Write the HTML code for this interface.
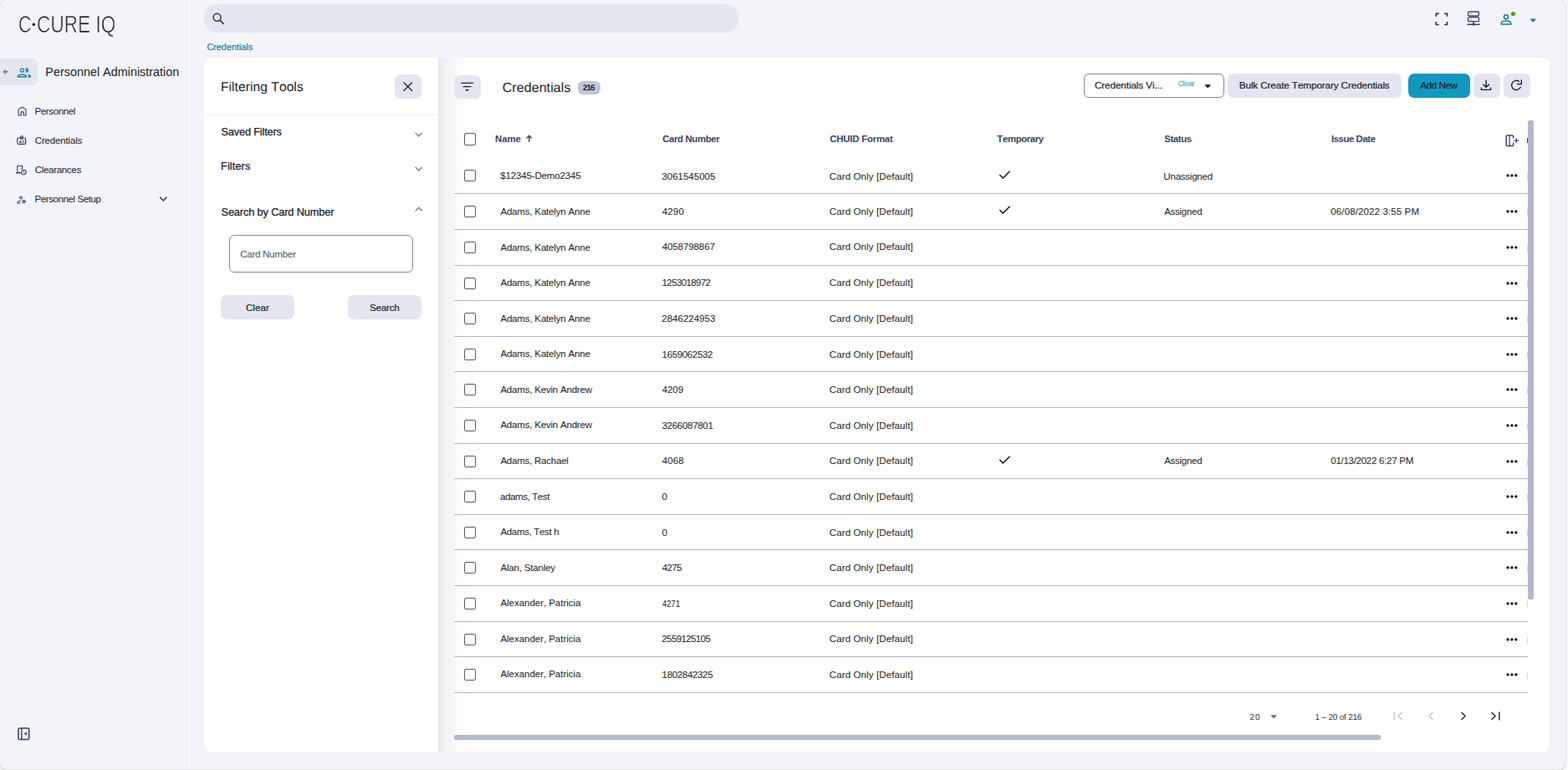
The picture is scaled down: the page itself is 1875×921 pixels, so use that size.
<!DOCTYPE html>
<html lang="en">
<head>
<meta charset="utf-8">
<title>C•CURE IQ - Credentials</title>
<style>
*{box-sizing:border-box;margin:0;padding:0}
html,body{width:1875px;height:921px;overflow:hidden;background:#f7f7f7}
body{font-family:"Liberation Sans",sans-serif;color:#1c1d29;font-kerning:none}
h1,h2,h3{font-weight:400;font-size:inherit}
ul{list-style:none}
a{text-decoration:none;color:inherit}
button{font:inherit;border:0;background:none}
.btn{border-radius:6px;background:#e3e6f1}
.cb{border:1px solid #5b5b5b;border-radius:2px;background:#fff}
.ln{background:#afb6cc}
</style>
</head>
<body>
<div id="app" style="position:absolute;left:0px;top:0px;width:1872px;height:920px;background:#f3f4fa;border-radius:8px;box-shadow:0 0 0 1px #e2e2e2,0 1px 0 1px #d9d9d9;overflow:hidden">
<aside id="sidebar" style="position:absolute;left:0px;top:0px;width:225px;height:920px;border-right:1px solid #fff;box-shadow:inset -1px 0 0 #e3e5f0">
<h1 aria-label="C•CURE IQ"><span style="position:absolute;white-space:nowrap;font-size:28.6px;line-height:36px;color:#242428;top:10.98px;left:21.71px;transform:scaleX(0.7509);transform-origin:0 0;-webkit-text-stroke:0.7px #f3f4fa;paint-order:fill stroke;will-change:transform;">C</span><span style="position:absolute;white-space:nowrap;font-size:13.4px;line-height:17px;color:#1c1c20;top:20.75px;left:38.07px;will-change:transform;">•</span><span style="position:absolute;white-space:nowrap;font-size:28.6px;line-height:36px;color:#242428;top:10.98px;left:43.65px;transform:scaleX(0.7907);transform-origin:0 0;-webkit-text-stroke:0.7px #f3f4fa;paint-order:fill stroke;will-change:transform;">CURE IQ</span></h1>
<div  style="position:absolute;left:0px;top:70px;width:44.75px;height:31.5px;background:#e3e6f1;border-radius:0 6px 6px 0"></div>
<svg style="position:absolute;left:3px;top:82.1px;overflow:visible;" width="8" height="8" viewBox="0 0 8 8" aria-hidden="true"><path d="M7 3.900H1.300M3.900 1.400 1.300 3.900l2.600 2.500" fill="none" stroke="#3a3f55" stroke-width="1" stroke-linejoin="miter"/></svg>
<svg style="position:absolute;left:19.2px;top:76.9px;overflow:visible;" width="20" height="20" viewBox="0 0 20 20" aria-hidden="true"><path transform="scale(.825)" fill="#1a7c9c" stroke="#e3e6f1" stroke-width=".35" d="M9 13.750c-2.340 0-7 1.170-7 3.500V19h14v-1.750c0-2.330-4.660-3.500-7-3.500zM4.340 17c.84-.58 2.870-1.250 4.660-1.250s3.820.67 4.660 1.250H4.340zM9 12c1.930 0 3.500-1.570 3.500-3.500S10.930 5 9 5 5.500 6.570 5.500 8.500 7.070 12 9 12zm0-5c.83 0 1.500.67 1.500 1.500S9.830 10 9 10s-1.500-.67-1.500-1.500S8.170 7 9 7zm7.040 6.810c1.160.84 1.960 1.960 1.960 3.440V19h4v-1.750c0-2.020-3.500-3.170-5.960-3.440zM15 12c1.930 0 3.500-1.570 3.500-3.500S16.930 5 15 5c-.54 0-1.040.13-1.500.35.63.89 1 1.980 1 3.150s-.37 2.260-1 3.150c.46.22.96.35 1.500.35z"/></svg>
<h2 style="position:absolute;white-space:nowrap;font-size:14.4px;line-height:18px;color:#1c1d29;top:77.01px;left:54.32px;">Personnel Administration</h2>
<ul>
<li>
<svg style="position:absolute;left:20.5px;top:126.5px;overflow:visible;" width="11" height="12" viewBox="0 0 11 12" aria-hidden="true"><path d="M1 11V3.900L5.500 1l4.500 2.900V11H7.100V6.900H4.100V11z" fill="none" stroke="#333b5c" stroke-width="1.100" stroke-linejoin="round"/></svg>
<a style="position:absolute;white-space:nowrap;font-size:11.6px;line-height:14px;color:#1c1d29;top:125.58px;left:41.45px;letter-spacing:-0.407px;">Personnel</a>
</li>
<li>
<svg style="position:absolute;left:20px;top:162px;overflow:visible;" width="12" height="12" viewBox="0 0 12 12" aria-hidden="true"><g fill="none" stroke="#333b5c" stroke-width="1.150"><rect x=".8" y="3" width="9.900" height="7.400" rx="1.500"/><rect x="4.800" y=".6" width="2.300" height="3.600" rx="1"/></g><path d="M2.900 8.700 4.500 5.300 6.100 8.700z" fill="#333b5c"/><path d="M7 6.300h2.200M7 8h2.200" stroke="#333b5c" stroke-width=".9" fill="none"/></svg>
<a style="position:absolute;white-space:nowrap;font-size:11.6px;line-height:14px;color:#1c1d29;top:160.58px;left:41.81px;letter-spacing:-0.207px;">Credentials</a>
</li>
<li>
<svg style="position:absolute;left:19px;top:196.5px;overflow:visible;" width="14" height="13" viewBox="0 0 14 13" aria-hidden="true"><g fill="none" stroke="#333b5c"><path d="M1.800 9.200V1.200h5.800v4.200" stroke-width="1.100"/><path d="M.2 9.700h5.800" stroke-width="1.500"/><circle cx="9.400" cy="9.100" r="2.800" stroke-width="1.050"/><path d="M9.400 7.500v1.700l1.100.8" stroke-width=".9"/></g><circle cx="6" cy="4.700" r=".55" fill="#333b5c"/></svg>
<a style="position:absolute;white-space:nowrap;font-size:11.6px;line-height:14px;color:#1c1d29;top:195.58px;left:41.81px;letter-spacing:-0.363px;">Clearances</a>
</li>
<li>
<svg style="position:absolute;left:20px;top:233.5px;overflow:visible;" width="12" height="10" viewBox="0 0 12 10" aria-hidden="true"><g fill="none" stroke="#333b5c" stroke-width="1.050"><circle cx="5.050" cy="2.450" r="1.500"/><path d="M4.800 6.300C2.600 6.300.9 7.100.9 8.500v.5h3.700"/><circle cx="8.550" cy="7.100" r="1.250"/><circle cx="8.550" cy="7.100" r="2.150" stroke-width=".9" stroke-dasharray=".85 1.400"/></g></svg>
<a style="position:absolute;white-space:nowrap;font-size:11.6px;line-height:14px;color:#1c1d29;top:230.58px;left:41.45px;letter-spacing:-0.445px;">Personnel Setup</a>
</li>
</ul>
<svg style="position:absolute;left:190px;top:234px;overflow:visible;" width="11" height="8" viewBox="0 0 11 8" aria-hidden="true"><path d="M1.2 1.8 5.3 5.900 9.400 1.800" fill="none" stroke="#2b3350" stroke-width="1.400"/></svg>
<svg style="position:absolute;left:21.3px;top:870.4px;overflow:visible;" width="15" height="16" viewBox="0 0 15 16" aria-hidden="true"><rect x="1" y="1" width="12.700" height="13.500" rx="1.600" fill="none" stroke="#3a4262" stroke-width="1.600"/><path d="M4.800 1v13.500" stroke="#3a4262" stroke-width="1.400"/><path d="M10.800 5.300v4.400L7.800 7.500z" fill="#3a4262"/></svg>
</aside>
<header id="topbar" style="position:absolute;left:224px;top:0px;width:1648px;height:68px;">
<div role="search" style="position:absolute;left:20px;top:5px;width:640px;height:34px;background:#e3e6f1;border-radius:17px"></div>
<svg style="position:absolute;left:30px;top:15px;overflow:visible;" width="15" height="15" viewBox="0 0 15 15" aria-hidden="true"><circle cx="5.600" cy="5.800" r="4.500" fill="none" stroke="#2f3650" stroke-width="1.500"/><path d="M8.900 9.200 13.800 14" stroke="#2f3650" stroke-width="1.700"/></svg>
<svg style="position:absolute;left:1491.6px;top:14.6px;overflow:visible;" width="16" height="16" viewBox="0 0 16 16" aria-hidden="true"><path d="M1.300 4.700V1.300h3.400M11.100 1.300h3.400v3.400M14.500 11.100v3.400h-3.400M4.700 14.500H1.300v-3.400" fill="none" stroke="#2f3650" stroke-width="1.700"/></svg>
<svg style="position:absolute;left:1529.5px;top:12.5px;overflow:visible;" width="16" height="18" viewBox="0 0 16 18" aria-hidden="true"><g fill="none" stroke="#3a4262" stroke-width="1.300"><rect x="1.600" y="1" width="12.800" height="5" rx="1.200"/><rect x="1.600" y="7.600" width="12.800" height="5" rx="1.200"/><path d="M8 12.600v3M.4 16.300h15.200" stroke-width="1.400"/></g><circle cx="8" cy="16.200" r="1.500" fill="#3a4262"/><path d="M3.600 3.500h3M3.600 10.100h3" stroke="#8a90b0" stroke-width="1"/></svg>
<svg style="position:absolute;left:1569.5px;top:13px;overflow:visible;" width="20" height="18" viewBox="0 0 20 18" aria-hidden="true"><g fill="none" stroke="#1a7c9c" stroke-width="1.600"><circle cx="7" cy="7.300" r="2.500"/><path d="M1.300 16v-.9c0-2 2.800-3.100 5.700-3.100s5.700 1.100 5.700 3.100v.9z"/></g><circle cx="15.500" cy="3.500" r="2.600" fill="#58a30a"/></svg>
<svg style="position:absolute;left:1604.5px;top:21.5px;overflow:visible;" width="9" height="6" viewBox="0 0 9 6" aria-hidden="true"><path d="M.3.400h7.800L4.200 4.700z" fill="#1a7c9c"/></svg>
</header>
<nav>
<a style="position:absolute;white-space:nowrap;font-size:10.9px;line-height:14px;color:#14749c;top:49.22px;left:247.45px;letter-spacing:-0.039px;-webkit-text-stroke:0.15px #14749c;">Credentials</a>
</nav>
<main id="card" style="position:absolute;left:244px;top:69px;width:1608.5px;height:831px;background:#fff;border-radius:9px;overflow:hidden">
<section id="filter-panel" style="position:absolute;left:0px;top:0px;width:280px;height:831px;">
<h2 style="position:absolute;white-space:nowrap;font-size:15.6px;line-height:20px;color:#1c1d29;top:25.99px;left:19.97px;letter-spacing:0.056px;text-rendering:geometricPrecision;">Filtering Tools</h2>
<button type="button" aria-label="Close" style="position:absolute;left:228px;top:20px;width:31.5px;height:28.75px;background:#e3e6f1;border-radius:7px">
<svg style="position:absolute;left:10px;top:9px;overflow:visible;" width="11.5" height="11" viewBox="0 0 11.5 11" aria-hidden="true"><path d="M.6.500l10.300 10.200M10.900.500.6 10.700" stroke="#1c1d29" stroke-width="1.300" fill="none"/></svg>
</button>
<div  style="position:absolute;left:1px;top:68px;width:278px;height:1px;background:#f0f1f7"></div>
<h3 style="position:absolute;white-space:nowrap;font-size:12.8px;line-height:16px;color:#1c1d29;top:80.66px;left:20.52px;letter-spacing:-0.188px;-webkit-text-stroke:0.25px #1c1d29;">Saved Filters</h3>
<svg style="position:absolute;left:252px;top:88.5px;overflow:visible;" width="9.5" height="6.5" viewBox="0 0 9.5 6.5" aria-hidden="true"><path d="M.7.900 4.700 5 8.700.900" fill="none" stroke="#666" stroke-width="1.100"/></svg>
<h3 style="position:absolute;white-space:nowrap;font-size:12.8px;line-height:16px;color:#1c1d29;top:121.86px;left:20.05px;letter-spacing:0.078px;-webkit-text-stroke:0.25px #1c1d29;">Filters</h3>
<svg style="position:absolute;left:252px;top:129.5px;overflow:visible;" width="9.5" height="6.5" viewBox="0 0 9.5 6.5" aria-hidden="true"><path d="M.7.900 4.700 5 8.700.900" fill="none" stroke="#666" stroke-width="1.100"/></svg>
<h3 style="position:absolute;white-space:nowrap;font-size:12.8px;line-height:16px;color:#1c1d29;top:176.66px;left:20.52px;letter-spacing:-0.151px;-webkit-text-stroke:0.25px #1c1d29;">Search by Card Number</h3>
<svg style="position:absolute;left:252px;top:178.3px;overflow:visible;" width="9.5" height="6.5" viewBox="0 0 9.5 6.5" aria-hidden="true"><path d="M.7 5.400 4.700 1.300 8.700 5.400" fill="none" stroke="#666" stroke-width="1.100"/></svg>
<div role="textbox" style="position:absolute;left:30px;top:212px;width:219.5px;height:44.5px;border:1px solid #8b8b8b;border-radius:6px;background:#fff">
<span style="position:absolute;white-space:nowrap;font-size:11.6px;line-height:14px;color:#4d5469;top:14.73px;left:12.16px;letter-spacing:-0.294px;">Card Number</span>
</div>
<button type="button" style="position:absolute;left:20px;top:284px;width:87.5px;height:28.6px;background:#e3e6f1;border-radius:7px">
<span style="position:absolute;white-space:nowrap;font-size:11.6px;line-height:14px;color:#1c1d29;top:7.58px;left:29.91px;letter-spacing:0.090px;-webkit-text-stroke:0.2px #1c1d29;">Clear</span>
</button>
<button type="button" style="position:absolute;left:172px;top:284px;width:87.75px;height:28.6px;background:#e3e6f1;border-radius:7px">
<span style="position:absolute;white-space:nowrap;font-size:11.6px;line-height:14px;color:#1c1d29;top:7.58px;left:26.07px;letter-spacing:-0.215px;-webkit-text-stroke:0.2px #1c1d29;">Search</span>
</button>
</section>
<section id="list-panel" style="position:absolute;left:280px;top:0px;width:1329px;height:831px;background:linear-gradient(90deg,#e8e8e8 0,#ececec 4px,#f0f0f0 8px,#f4f4f4 12px,#f7f7f7 17px,#fafafa 22px,#fcfcfc 29px,#fefefe 38px,#fff 47px)">
<button type="button" aria-label="Filter" style="position:absolute;left:19px;top:21px;width:31.6px;height:27.8px;background:#e3e6f1;border-radius:7px">
<svg style="position:absolute;left:8px;top:8px;overflow:visible;" width="15.5" height="11" viewBox="0 0 15.5 11" aria-hidden="true"><path d="M.2 1.400h14.800M2.700 5.600h9.800M5.800 9.800h3.600" stroke="#1c1d29" stroke-width="1.400" fill="none"/></svg>
</button>
<h2 style="position:absolute;white-space:nowrap;font-size:16px;line-height:20px;color:#1c1d29;top:26.95px;left:76.69px;letter-spacing:0.076px;text-rendering:geometricPrecision;">Credentials</h2>
<span  style="position:absolute;left:166.6px;top:27.9px;width:27px;height:15.9px;background:#c2c6d7;border-radius:6px">
<span style="position:absolute;white-space:nowrap;font-size:9.7px;line-height:12px;color:#1c1d29;top:2.64px;font-weight:700;left:6.46px;letter-spacing:-0.874px;text-rendering:geometricPrecision;">216</span>
</span>
<div role="combobox" style="position:absolute;left:772.25px;top:19px;width:167.25px;height:28.6px;border:1px solid #878787;border-radius:6px;background:#fff">
<span style="position:absolute;white-space:nowrap;font-size:11.8px;line-height:15px;color:#1c1d29;top:6.01px;left:11.65px;letter-spacing:-0.138px;-webkit-text-stroke:0.2px #1c1d29;">Credentials Vi...</span>
<span style="position:absolute;white-space:nowrap;font-size:9px;line-height:11px;color:#23a0c6;top:5.98px;left:111.19px;letter-spacing:-0.350px;">Clear</span>
<svg style="position:absolute;left:142.95px;top:11.6px;overflow:visible;" width="9" height="5.5" viewBox="0 0 9 5.5" aria-hidden="true"><path d="M.3.200h8L4.300 4.500z" fill="#1c1d29"/></svg>
</div>
<button type="button" style="position:absolute;left:944px;top:19px;width:208px;height:28.8px;background:#e3e6f1;border-radius:7px">
<span style="position:absolute;white-space:nowrap;font-size:11.8px;line-height:15px;color:#1c1d29;top:7.21px;left:13.78px;letter-spacing:-0.153px;-webkit-text-stroke:0.2px #1c1d29;">Bulk Create Temporary Credentials</span>
</button>
<button type="button" style="position:absolute;left:1160px;top:19px;width:73.5px;height:28.8px;background:#1198bf;border-radius:7px">
<span style="position:absolute;white-space:nowrap;font-size:11.8px;line-height:15px;color:#1c1d29;top:7.21px;left:14.23px;letter-spacing:-0.523px;-webkit-text-stroke:0.2px #1c1d29;">Add New</span>
</button>
<button type="button" aria-label="Download" style="position:absolute;left:1238px;top:19px;width:31.6px;height:28.8px;background:#e3e6f1;border-radius:7px">
<svg style="position:absolute;left:8px;top:7.4px;overflow:visible;" width="14.5" height="14" viewBox="0 0 14.5 14" aria-hidden="true"><path d="M7.100.600v8.500M3.300 5.700l3.800 3.600 3.800-3.600M1.400 9.800v2.600h11.200V9.800" fill="none" stroke="#1c1d29" stroke-width="1.350"/></svg>
</button>
<button type="button" aria-label="Refresh" style="position:absolute;left:1274px;top:19px;width:32px;height:28.8px;background:#e3e6f1;border-radius:7px">
<svg style="position:absolute;left:7.6px;top:7.4px;overflow:visible;" width="14.5" height="14" viewBox="0 0 14.5 14" aria-hidden="true"><path d="M12.460 8.820A5.600 5.600 0 1 1 11.160 2.940" fill="none" stroke="#1c1d29" stroke-width="1.350"/><path d="M13.300.600v5H8.100" fill="none" stroke="#1c1d29" stroke-width="1.350"/></svg>
</button>
<div role="table" style="position:absolute;left:19px;top:75px;width:1291px;height:728px;overflow:hidden">
<div role="row" style="position:absolute;left:0px;top:2px;width:1283.5px;height:42.67px;">
<span class="cb" style="position:absolute;left:12px;top:13px;width:14px;height:14.5px;"></span>
<span style="position:absolute;white-space:nowrap;font-size:11.4px;line-height:14px;color:#394461;top:12.95px;font-weight:700;left:48.99px;letter-spacing:-0.082px;">Name</span>
<span style="position:absolute;white-space:nowrap;font-size:11.4px;line-height:14px;color:#394461;top:12.95px;font-weight:700;left:249.28px;letter-spacing:-0.382px;">Card Number</span>
<span style="position:absolute;white-space:nowrap;font-size:11.4px;line-height:14px;color:#394461;top:12.95px;font-weight:700;left:449.28px;letter-spacing:-0.218px;">CHUID Format</span>
<span style="position:absolute;white-space:nowrap;font-size:11.4px;line-height:14px;color:#394461;top:12.95px;font-weight:700;left:649.37px;letter-spacing:-0.379px;">Temporary</span>
<span style="position:absolute;white-space:nowrap;font-size:11.4px;line-height:14px;color:#394461;top:12.95px;font-weight:700;left:849.27px;letter-spacing:-0.399px;">Status</span>
<span style="position:absolute;white-space:nowrap;font-size:11.4px;line-height:14px;color:#394461;top:12.95px;font-weight:700;left:1048.99px;letter-spacing:-0.442px;">Issue Date</span>
<svg style="position:absolute;left:85.5px;top:15.3px;overflow:visible;" width="7.5" height="9" viewBox="0 0 7.5 9" aria-hidden="true"><path d="M3.750 8.700V1.400M.6 4.500 3.750 1.300 6.900 4.500" fill="none" stroke="#394461" stroke-width="1.450"/></svg>
<svg style="position:absolute;left:1256.5px;top:14.5px;overflow:visible;" width="17" height="15" viewBox="0 0 17 15" aria-hidden="true"><path d="M9.700 4.400V2.200a1.300 1.300 0 0 0-1.300-1.300H2.500a1.300 1.300 0 0 0-1.300 1.300v10a1.300 1.300 0 0 0 1.300 1.300h5.900a1.300 1.300 0 0 0 1.300-1.300V9.800" fill="none" stroke="#394461" stroke-width="1.500"/><path d="M5.100.900v12.600" stroke="#394461" stroke-width="1.200"/><path d="M10.400 7.100h5.800M13.300 4.200v5.800" stroke="#394461" stroke-width="1.250"/></svg>
<div  style="position:absolute;left:1283px;top:19px;width:1px;height:5.5px;background:#394461"></div>
</div>
<div role="row" style="position:absolute;left:0px;top:44.4px;width:1284px;height:43.6px;">
<div class="ln" style="position:absolute;left:0px;top:42.6px;width:1284px;height:1px;"></div>
<span class="cb" style="position:absolute;left:12px;top:14.6px;width:14px;height:14px;"></span>
<span style="position:absolute;white-space:nowrap;font-size:11.6px;line-height:14px;color:#1c1d29;top:14.68px;left:55.28px;letter-spacing:-0.201px;">$12345-Demo2345</span>
<span style="position:absolute;white-space:nowrap;font-size:11.6px;line-height:14px;color:#1c1d29;top:15.68px;left:248.46px;letter-spacing:-0.065px;">3061545005</span>
<span style="position:absolute;white-space:nowrap;font-size:11.6px;line-height:14px;color:#1c1d29;top:15.68px;left:448.81px;letter-spacing:0.071px;">Card Only [Default]</span>
<svg style="position:absolute;left:650.5px;top:15.6px;overflow:visible;" width="14" height="10" viewBox="0 0 14 10" aria-hidden="true"><path d="M1.300 5 5.300 8.900 13.600.800" fill="none" stroke="#111" stroke-width="1.400"/></svg>
<span style="position:absolute;white-space:nowrap;font-size:11.6px;line-height:14px;color:#1c1d29;top:15.68px;left:848.36px;letter-spacing:-0.274px;">Unassigned</span>
<svg style="position:absolute;left:1257.5px;top:19.6px;overflow:visible;" width="14" height="4" viewBox="0 0 14 4" aria-hidden="true"><circle cx="2.050" cy="1.950" r="1.650" fill="#0b0b10"/><circle cx="6.900" cy="1.950" r="1.650" fill="#0b0b10"/><circle cx="11.800" cy="1.950" r="1.650" fill="#0b0b10"/></svg>
<div  style="position:absolute;left:1283px;top:18.6px;width:1px;height:8px;background:#f5d58e"></div>
</div>
<div role="row" style="position:absolute;left:0px;top:88px;width:1284px;height:43px;">
<div class="ln" style="position:absolute;left:0px;top:42px;width:1284px;height:1px;"></div>
<span class="cb" style="position:absolute;left:12px;top:14px;width:14px;height:14px;"></span>
<span style="position:absolute;white-space:nowrap;font-size:11.6px;line-height:14px;color:#1c1d29;top:14.08px;left:55.38px;letter-spacing:-0.218px;">Adams, Katelyn Anne</span>
<span style="position:absolute;white-space:nowrap;font-size:11.6px;line-height:14px;color:#1c1d29;top:14.08px;left:248.63px;letter-spacing:0.138px;">4290</span>
<span style="position:absolute;white-space:nowrap;font-size:11.6px;line-height:14px;color:#1c1d29;top:14.08px;left:448.81px;letter-spacing:0.071px;">Card Only [Default]</span>
<svg style="position:absolute;left:650.5px;top:14px;overflow:visible;" width="14" height="10" viewBox="0 0 14 10" aria-hidden="true"><path d="M1.300 5 5.300 8.900 13.600.800" fill="none" stroke="#111" stroke-width="1.400"/></svg>
<span style="position:absolute;white-space:nowrap;font-size:11.6px;line-height:14px;color:#1c1d29;top:14.08px;left:849.23px;letter-spacing:-0.328px;">Assigned</span>
<span style="position:absolute;white-space:nowrap;font-size:11.6px;line-height:14px;color:#1c1d29;top:14.08px;left:1048.3px;letter-spacing:0.078px;">06/08/2022 3:55 PM</span>
<svg style="position:absolute;left:1257.5px;top:19px;overflow:visible;" width="14" height="4" viewBox="0 0 14 4" aria-hidden="true"><circle cx="2.050" cy="1.950" r="1.650" fill="#0b0b10"/><circle cx="6.900" cy="1.950" r="1.650" fill="#0b0b10"/><circle cx="11.800" cy="1.950" r="1.650" fill="#0b0b10"/></svg>
<div  style="position:absolute;left:1283px;top:18px;width:1px;height:8px;background:#f5d58e"></div>
</div>
<div role="row" style="position:absolute;left:0px;top:131px;width:1284px;height:43px;">
<div class="ln" style="position:absolute;left:0px;top:42px;width:1284px;height:1px;"></div>
<span class="cb" style="position:absolute;left:12px;top:14px;width:14px;height:14px;"></span>
<span style="position:absolute;white-space:nowrap;font-size:11.6px;line-height:14px;color:#1c1d29;top:14.08px;left:55.38px;letter-spacing:-0.218px;">Adams, Katelyn Anne</span>
<span style="position:absolute;white-space:nowrap;font-size:11.6px;line-height:14px;color:#1c1d29;top:13.08px;left:248.63px;letter-spacing:-0.129px;">4058798867</span>
<span style="position:absolute;white-space:nowrap;font-size:11.6px;line-height:14px;color:#1c1d29;top:13.08px;left:448.81px;letter-spacing:0.071px;">Card Only [Default]</span>
<svg style="position:absolute;left:1257.5px;top:19px;overflow:visible;" width="14" height="4" viewBox="0 0 14 4" aria-hidden="true"><circle cx="2.050" cy="1.950" r="1.650" fill="#0b0b10"/><circle cx="6.900" cy="1.950" r="1.650" fill="#0b0b10"/><circle cx="11.800" cy="1.950" r="1.650" fill="#0b0b10"/></svg>
<div  style="position:absolute;left:1283px;top:18px;width:1px;height:8px;background:#f5d58e"></div>
</div>
<div role="row" style="position:absolute;left:0px;top:174px;width:1284px;height:42px;">
<div class="ln" style="position:absolute;left:0px;top:41px;width:1284px;height:1px;"></div>
<span class="cb" style="position:absolute;left:12px;top:14px;width:14px;height:14px;"></span>
<span style="position:absolute;white-space:nowrap;font-size:11.6px;line-height:14px;color:#1c1d29;top:13.08px;left:55.38px;letter-spacing:-0.218px;">Adams, Katelyn Anne</span>
<span style="position:absolute;white-space:nowrap;font-size:11.6px;line-height:14px;color:#1c1d29;top:13.08px;left:248.62px;letter-spacing:-0.683px;">1253018972</span>
<span style="position:absolute;white-space:nowrap;font-size:11.6px;line-height:14px;color:#1c1d29;top:13.08px;left:448.81px;letter-spacing:0.071px;">Card Only [Default]</span>
<svg style="position:absolute;left:1257.5px;top:19px;overflow:visible;" width="14" height="4" viewBox="0 0 14 4" aria-hidden="true"><circle cx="2.050" cy="1.950" r="1.650" fill="#0b0b10"/><circle cx="6.900" cy="1.950" r="1.650" fill="#0b0b10"/><circle cx="11.800" cy="1.950" r="1.650" fill="#0b0b10"/></svg>
<div  style="position:absolute;left:1283px;top:18px;width:1px;height:8px;background:#f5d58e"></div>
</div>
<div role="row" style="position:absolute;left:0px;top:216px;width:1284px;height:43px;">
<div class="ln" style="position:absolute;left:0px;top:42px;width:1284px;height:1px;"></div>
<span class="cb" style="position:absolute;left:12px;top:14px;width:14px;height:14px;"></span>
<span style="position:absolute;white-space:nowrap;font-size:11.6px;line-height:14px;color:#1c1d29;top:14.08px;left:55.38px;letter-spacing:-0.218px;">Adams, Katelyn Anne</span>
<span style="position:absolute;white-space:nowrap;font-size:11.6px;line-height:14px;color:#1c1d29;top:14.08px;left:248.32px;letter-spacing:-0.047px;">2846224953</span>
<span style="position:absolute;white-space:nowrap;font-size:11.6px;line-height:14px;color:#1c1d29;top:14.08px;left:448.81px;letter-spacing:0.071px;">Card Only [Default]</span>
<svg style="position:absolute;left:1257.5px;top:19px;overflow:visible;" width="14" height="4" viewBox="0 0 14 4" aria-hidden="true"><circle cx="2.050" cy="1.950" r="1.650" fill="#0b0b10"/><circle cx="6.900" cy="1.950" r="1.650" fill="#0b0b10"/><circle cx="11.800" cy="1.950" r="1.650" fill="#0b0b10"/></svg>
<div  style="position:absolute;left:1283px;top:18px;width:1px;height:8px;background:#f5d58e"></div>
</div>
<div role="row" style="position:absolute;left:0px;top:259px;width:1284px;height:42px;">
<div class="ln" style="position:absolute;left:0px;top:41px;width:1284px;height:1px;"></div>
<span class="cb" style="position:absolute;left:12px;top:14px;width:14px;height:14px;"></span>
<span style="position:absolute;white-space:nowrap;font-size:11.6px;line-height:14px;color:#1c1d29;top:13.08px;left:55.38px;letter-spacing:-0.218px;">Adams, Katelyn Anne</span>
<span style="position:absolute;white-space:nowrap;font-size:11.6px;line-height:14px;color:#1c1d29;top:14.08px;left:248.62px;letter-spacing:-0.405px;">1659062532</span>
<span style="position:absolute;white-space:nowrap;font-size:11.6px;line-height:14px;color:#1c1d29;top:14.08px;left:448.81px;letter-spacing:0.071px;">Card Only [Default]</span>
<svg style="position:absolute;left:1257.5px;top:19px;overflow:visible;" width="14" height="4" viewBox="0 0 14 4" aria-hidden="true"><circle cx="2.050" cy="1.950" r="1.650" fill="#0b0b10"/><circle cx="6.900" cy="1.950" r="1.650" fill="#0b0b10"/><circle cx="11.800" cy="1.950" r="1.650" fill="#0b0b10"/></svg>
<div  style="position:absolute;left:1283px;top:18px;width:1px;height:8px;background:#f5d58e"></div>
</div>
<div role="row" style="position:absolute;left:0px;top:301px;width:1284px;height:43px;">
<div class="ln" style="position:absolute;left:0px;top:42px;width:1284px;height:1px;"></div>
<span class="cb" style="position:absolute;left:12px;top:14px;width:14px;height:14px;"></span>
<span style="position:absolute;white-space:nowrap;font-size:11.6px;line-height:14px;color:#1c1d29;top:14.08px;left:55.38px;letter-spacing:-0.243px;">Adams, Kevin Andrew</span>
<span style="position:absolute;white-space:nowrap;font-size:11.6px;line-height:14px;color:#1c1d29;top:14.08px;left:248.63px;letter-spacing:-0.080px;">4209</span>
<span style="position:absolute;white-space:nowrap;font-size:11.6px;line-height:14px;color:#1c1d29;top:14.08px;left:448.81px;letter-spacing:0.071px;">Card Only [Default]</span>
<svg style="position:absolute;left:1257.5px;top:19px;overflow:visible;" width="14" height="4" viewBox="0 0 14 4" aria-hidden="true"><circle cx="2.050" cy="1.950" r="1.650" fill="#0b0b10"/><circle cx="6.900" cy="1.950" r="1.650" fill="#0b0b10"/><circle cx="11.800" cy="1.950" r="1.650" fill="#0b0b10"/></svg>
<div  style="position:absolute;left:1283px;top:18px;width:1px;height:8px;background:#f5d58e"></div>
</div>
<div role="row" style="position:absolute;left:0px;top:344px;width:1284px;height:43px;">
<div class="ln" style="position:absolute;left:0px;top:42px;width:1284px;height:1px;"></div>
<span class="cb" style="position:absolute;left:12px;top:14px;width:14px;height:14px;"></span>
<span style="position:absolute;white-space:nowrap;font-size:11.6px;line-height:14px;color:#1c1d29;top:13.08px;left:55.38px;letter-spacing:-0.243px;">Adams, Kevin Andrew</span>
<span style="position:absolute;white-space:nowrap;font-size:11.6px;line-height:14px;color:#1c1d29;top:14.08px;left:248.46px;letter-spacing:-0.334px;">3266087801</span>
<span style="position:absolute;white-space:nowrap;font-size:11.6px;line-height:14px;color:#1c1d29;top:14.08px;left:448.81px;letter-spacing:0.071px;">Card Only [Default]</span>
<svg style="position:absolute;left:1257.5px;top:19px;overflow:visible;" width="14" height="4" viewBox="0 0 14 4" aria-hidden="true"><circle cx="2.050" cy="1.950" r="1.650" fill="#0b0b10"/><circle cx="6.900" cy="1.950" r="1.650" fill="#0b0b10"/><circle cx="11.800" cy="1.950" r="1.650" fill="#0b0b10"/></svg>
<div  style="position:absolute;left:1283px;top:18px;width:1px;height:8px;background:#f5d58e"></div>
</div>
<div role="row" style="position:absolute;left:0px;top:387px;width:1284px;height:42px;">
<div class="ln" style="position:absolute;left:0px;top:41px;width:1284px;height:1px;"></div>
<span class="cb" style="position:absolute;left:12px;top:14px;width:14px;height:14px;"></span>
<span style="position:absolute;white-space:nowrap;font-size:11.6px;line-height:14px;color:#1c1d29;top:13.08px;left:55.38px;letter-spacing:-0.274px;">Adams, Rachael</span>
<span style="position:absolute;white-space:nowrap;font-size:11.6px;line-height:14px;color:#1c1d29;top:13.08px;left:248.63px;letter-spacing:0.072px;">4068</span>
<span style="position:absolute;white-space:nowrap;font-size:11.6px;line-height:14px;color:#1c1d29;top:13.08px;left:448.81px;letter-spacing:0.071px;">Card Only [Default]</span>
<svg style="position:absolute;left:650.5px;top:14px;overflow:visible;" width="14" height="10" viewBox="0 0 14 10" aria-hidden="true"><path d="M1.300 5 5.300 8.900 13.600.800" fill="none" stroke="#111" stroke-width="1.400"/></svg>
<span style="position:absolute;white-space:nowrap;font-size:11.6px;line-height:14px;color:#1c1d29;top:13.08px;left:849.23px;letter-spacing:-0.328px;">Assigned</span>
<span style="position:absolute;white-space:nowrap;font-size:11.6px;line-height:14px;color:#1c1d29;top:13.08px;left:1048.3px;letter-spacing:-0.319px;">01/13/2022 6:27 PM</span>
<svg style="position:absolute;left:1257.5px;top:19px;overflow:visible;" width="14" height="4" viewBox="0 0 14 4" aria-hidden="true"><circle cx="2.050" cy="1.950" r="1.650" fill="#0b0b10"/><circle cx="6.900" cy="1.950" r="1.650" fill="#0b0b10"/><circle cx="11.800" cy="1.950" r="1.650" fill="#0b0b10"/></svg>
<div  style="position:absolute;left:1283px;top:18px;width:1px;height:8px;background:#f5d58e"></div>
</div>
<div role="row" style="position:absolute;left:0px;top:429px;width:1284px;height:43px;">
<div class="ln" style="position:absolute;left:0px;top:42px;width:1284px;height:1px;"></div>
<span class="cb" style="position:absolute;left:12px;top:14px;width:14px;height:14px;"></span>
<span style="position:absolute;white-space:nowrap;font-size:11.6px;line-height:14px;color:#1c1d29;top:14.08px;left:54.91px;letter-spacing:-0.424px;">adams, Test</span>
<span style="position:absolute;white-space:nowrap;font-size:11.6px;line-height:14px;color:#1c1d29;top:14.08px;left:248.45px;">0</span>
<span style="position:absolute;white-space:nowrap;font-size:11.6px;line-height:14px;color:#1c1d29;top:14.08px;left:448.81px;letter-spacing:0.071px;">Card Only [Default]</span>
<svg style="position:absolute;left:1257.5px;top:19px;overflow:visible;" width="14" height="4" viewBox="0 0 14 4" aria-hidden="true"><circle cx="2.050" cy="1.950" r="1.650" fill="#0b0b10"/><circle cx="6.900" cy="1.950" r="1.650" fill="#0b0b10"/><circle cx="11.800" cy="1.950" r="1.650" fill="#0b0b10"/></svg>
<div  style="position:absolute;left:1283px;top:18px;width:1px;height:8px;background:#f5d58e"></div>
</div>
<div role="row" style="position:absolute;left:0px;top:472px;width:1284px;height:42px;">
<div class="ln" style="position:absolute;left:0px;top:41px;width:1284px;height:1px;"></div>
<span class="cb" style="position:absolute;left:12px;top:14px;width:14px;height:14px;"></span>
<span style="position:absolute;white-space:nowrap;font-size:11.6px;line-height:14px;color:#1c1d29;top:13.08px;left:55.38px;letter-spacing:-0.376px;">Adams, Test h</span>
<span style="position:absolute;white-space:nowrap;font-size:11.6px;line-height:14px;color:#1c1d29;top:14.08px;left:248.45px;">0</span>
<span style="position:absolute;white-space:nowrap;font-size:11.6px;line-height:14px;color:#1c1d29;top:14.08px;left:448.81px;letter-spacing:0.071px;">Card Only [Default]</span>
<svg style="position:absolute;left:1257.5px;top:19px;overflow:visible;" width="14" height="4" viewBox="0 0 14 4" aria-hidden="true"><circle cx="2.050" cy="1.950" r="1.650" fill="#0b0b10"/><circle cx="6.900" cy="1.950" r="1.650" fill="#0b0b10"/><circle cx="11.800" cy="1.950" r="1.650" fill="#0b0b10"/></svg>
<div  style="position:absolute;left:1283px;top:18px;width:1px;height:8px;background:#f5d58e"></div>
</div>
<div role="row" style="position:absolute;left:0px;top:514px;width:1284px;height:43px;">
<div class="ln" style="position:absolute;left:0px;top:42px;width:1284px;height:1px;"></div>
<span class="cb" style="position:absolute;left:12px;top:14px;width:14px;height:14px;"></span>
<span style="position:absolute;white-space:nowrap;font-size:11.6px;line-height:14px;color:#1c1d29;top:14.08px;left:55.38px;letter-spacing:-0.213px;">Alan, Stanley</span>
<span style="position:absolute;white-space:nowrap;font-size:11.6px;line-height:14px;color:#1c1d29;top:14.08px;left:248.63px;letter-spacing:-0.684px;">4275</span>
<span style="position:absolute;white-space:nowrap;font-size:11.6px;line-height:14px;color:#1c1d29;top:14.08px;left:448.81px;letter-spacing:0.071px;">Card Only [Default]</span>
<svg style="position:absolute;left:1257.5px;top:19px;overflow:visible;" width="14" height="4" viewBox="0 0 14 4" aria-hidden="true"><circle cx="2.050" cy="1.950" r="1.650" fill="#0b0b10"/><circle cx="6.900" cy="1.950" r="1.650" fill="#0b0b10"/><circle cx="11.800" cy="1.950" r="1.650" fill="#0b0b10"/></svg>
<div  style="position:absolute;left:1283px;top:18px;width:1px;height:8px;background:#f5d58e"></div>
</div>
<div role="row" style="position:absolute;left:0px;top:557px;width:1284px;height:43px;">
<div class="ln" style="position:absolute;left:0px;top:42px;width:1284px;height:1px;"></div>
<span class="cb" style="position:absolute;left:12px;top:14px;width:14px;height:14px;"></span>
<span style="position:absolute;white-space:nowrap;font-size:11.6px;line-height:14px;color:#1c1d29;top:13.08px;left:55.38px;letter-spacing:-0.074px;">Alexander, Patricia</span>
<span style="position:absolute;white-space:nowrap;font-size:11.6px;line-height:14px;color:#1c1d29;top:14.08px;left:248.68px;transform:scaleX(0.8209);transform-origin:0 0;">4271</span>
<span style="position:absolute;white-space:nowrap;font-size:11.6px;line-height:14px;color:#1c1d29;top:14.08px;left:448.81px;letter-spacing:0.071px;">Card Only [Default]</span>
<svg style="position:absolute;left:1257.5px;top:19px;overflow:visible;" width="14" height="4" viewBox="0 0 14 4" aria-hidden="true"><circle cx="2.050" cy="1.950" r="1.650" fill="#0b0b10"/><circle cx="6.900" cy="1.950" r="1.650" fill="#0b0b10"/><circle cx="11.800" cy="1.950" r="1.650" fill="#0b0b10"/></svg>
<div  style="position:absolute;left:1283px;top:18px;width:1px;height:8px;background:#f5d58e"></div>
</div>
<div role="row" style="position:absolute;left:0px;top:600px;width:1284px;height:42px;">
<div class="ln" style="position:absolute;left:0px;top:41px;width:1284px;height:1px;"></div>
<span class="cb" style="position:absolute;left:12px;top:14px;width:14px;height:14px;"></span>
<span style="position:absolute;white-space:nowrap;font-size:11.6px;line-height:14px;color:#1c1d29;top:13.08px;left:55.38px;letter-spacing:-0.074px;">Alexander, Patricia</span>
<span style="position:absolute;white-space:nowrap;font-size:11.6px;line-height:14px;color:#1c1d29;top:13.08px;left:248.32px;letter-spacing:-0.660px;">2559125105</span>
<span style="position:absolute;white-space:nowrap;font-size:11.6px;line-height:14px;color:#1c1d29;top:13.08px;left:448.81px;letter-spacing:0.071px;">Card Only [Default]</span>
<svg style="position:absolute;left:1257.5px;top:19px;overflow:visible;" width="14" height="4" viewBox="0 0 14 4" aria-hidden="true"><circle cx="2.050" cy="1.950" r="1.650" fill="#0b0b10"/><circle cx="6.900" cy="1.950" r="1.650" fill="#0b0b10"/><circle cx="11.800" cy="1.950" r="1.650" fill="#0b0b10"/></svg>
<div  style="position:absolute;left:1283px;top:18px;width:1px;height:8px;background:#f5d58e"></div>
</div>
<div role="row" style="position:absolute;left:0px;top:642px;width:1284px;height:43px;">
<div class="ln" style="position:absolute;left:0px;top:42px;width:1284px;height:1px;"></div>
<span class="cb" style="position:absolute;left:12px;top:14px;width:14px;height:14px;"></span>
<span style="position:absolute;white-space:nowrap;font-size:11.6px;line-height:14px;color:#1c1d29;top:13.08px;left:55.38px;letter-spacing:-0.074px;">Alexander, Patricia</span>
<span style="position:absolute;white-space:nowrap;font-size:11.6px;line-height:14px;color:#1c1d29;top:14.08px;left:248.62px;letter-spacing:-0.388px;">1802842325</span>
<span style="position:absolute;white-space:nowrap;font-size:11.6px;line-height:14px;color:#1c1d29;top:14.08px;left:448.81px;letter-spacing:0.071px;">Card Only [Default]</span>
<svg style="position:absolute;left:1257.5px;top:19px;overflow:visible;" width="14" height="4" viewBox="0 0 14 4" aria-hidden="true"><circle cx="2.050" cy="1.950" r="1.650" fill="#0b0b10"/><circle cx="6.900" cy="1.950" r="1.650" fill="#0b0b10"/><circle cx="11.800" cy="1.950" r="1.650" fill="#0b0b10"/></svg>
<div  style="position:absolute;left:1283px;top:18px;width:1px;height:8px;background:#f5d58e"></div>
</div>
<div  style="position:absolute;left:1284px;top:0px;width:7px;height:572.5px;background:#b4b9cc;border-radius:2px"></div>
</div>
<span style="position:absolute;white-space:nowrap;font-size:10px;line-height:12px;color:#333;top:784.03px;left:970.6px;letter-spacing:0.771px;text-rendering:geometricPrecision;">20</span>
<svg style="position:absolute;left:994.7px;top:785.6px;overflow:visible;" width="9" height="5.5" viewBox="0 0 9 5.5" aria-hidden="true"><path d="M.3.300h7.800L4.200 4.500z" fill="#707070"/></svg>
<span style="position:absolute;white-space:nowrap;font-size:10px;line-height:12px;color:#333;top:784.03px;left:1048.54px;letter-spacing:-0.207px;text-rendering:geometricPrecision;">1 – 20 of 216</span>
<svg style="position:absolute;left:1142.4px;top:782px;overflow:visible;" width="12" height="11" viewBox="0 0 12 11" aria-hidden="true"><path d="M1.200.600v9.800M10.600 1 6 5.500l4.600 4.500" fill="none" stroke="#c9c9c9" stroke-width="1.500"/></svg>
<svg style="position:absolute;left:1183px;top:782px;overflow:visible;" width="8" height="11" viewBox="0 0 8 11" aria-hidden="true"><path d="M6.600 1 2 5.500l4.600 4.500" fill="none" stroke="#c9c9c9" stroke-width="1.500"/></svg>
<svg style="position:absolute;left:1221.6px;top:782px;overflow:visible;" width="8" height="11" viewBox="0 0 8 11" aria-hidden="true"><path d="M1.400 1 6 5.500 1.400 10" fill="none" stroke="#333" stroke-width="1.500"/></svg>
<svg style="position:absolute;left:1257.5px;top:782px;overflow:visible;" width="12" height="11" viewBox="0 0 12 11" aria-hidden="true"><path d="M1.400 1 6 5.500 1.400 10M10.800.600v9.800" fill="none" stroke="#333" stroke-width="1.500"/></svg>
<div  style="position:absolute;left:19px;top:809.6px;width:1107.5px;height:6.8px;background:#b4b9cc;border-radius:2px"></div>
</section>
</main>
</div>
</body>
</html>
